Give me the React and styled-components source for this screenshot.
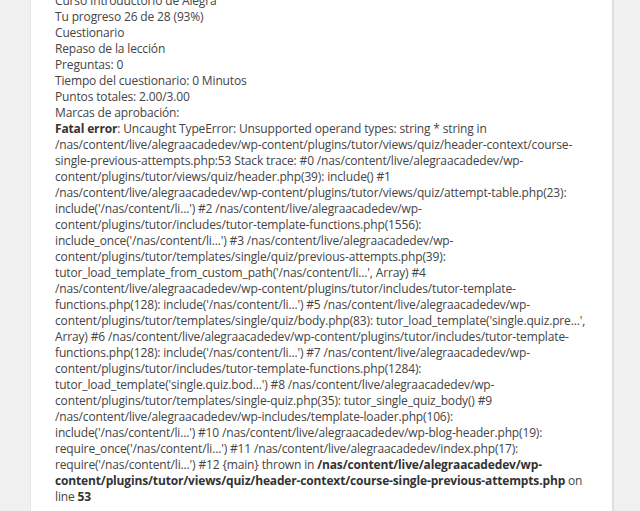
import React from 'react';
import styled, { createGlobalStyle } from 'styled-components';

const GlobalStyle = createGlobalStyle`
    html, body {
        margin: 0;
        padding: 0;
        background-color: #F0F0F0;
    }
`;

const Page = styled.div`
    height: 511px;
    overflow: hidden;
    padding: 0 26px 0 30px;
`;

const Panel = styled.div`
    background-color: #FFFFFF;
    border-left: 1px solid #E6E6E6;
    border-right: 2px solid #DEDEDE;
    margin-top: -7px;
    padding: 0 20px 40px 24px;
    min-height: 560px;
    font-family: "Open Sans", "Noto Sans", sans-serif;
    font-size: 12px;
    letter-spacing: -0.15px;
    line-height: 16px;
    color: #444444;
`;

const Line = styled.div`
    white-space: nowrap;
`;

const ErrorBlock = styled.div`
    white-space: nowrap;

    b {
        font-weight: bold;
        color: #333333;
    }
`;

const info = [
    'Curso Introductorio de Alegra',
    'Tu progreso 26 de 28 (93%)',
    'Cuestionario',
    'Repaso de la lección',
    'Preguntas: 0',
    'Tiempo del cuestionario: 0 Minutos',
    'Puntos totales: 2.00/3.00',
    'Marcas de aprobación:',
];

const trace = [
    "/nas/content/live/alegraacadedev/wp-content/plugins/tutor/views/quiz/header-context/course-",
    "single-previous-attempts.php:53 Stack trace: #0 /nas/content/live/alegraacadedev/wp-",
    "content/plugins/tutor/views/quiz/header.php(39): include() #1",
    "/nas/content/live/alegraacadedev/wp-content/plugins/tutor/views/quiz/attempt-table.php(23):",
    "include('/nas/content/li...') #2 /nas/content/live/alegraacadedev/wp-",
    "content/plugins/tutor/includes/tutor-template-functions.php(1556):",
    "include_once('/nas/content/li...') #3 /nas/content/live/alegraacadedev/wp-",
    "content/plugins/tutor/templates/single/quiz/previous-attempts.php(39):",
    "tutor_load_template_from_custom_path('/nas/content/li...', Array) #4",
    "/nas/content/live/alegraacadedev/wp-content/plugins/tutor/includes/tutor-template-",
    "functions.php(128): include('/nas/content/li...') #5 /nas/content/live/alegraacadedev/wp-",
    "content/plugins/tutor/templates/single/quiz/body.php(83): tutor_load_template('single.quiz.pre...',",
    "Array) #6 /nas/content/live/alegraacadedev/wp-content/plugins/tutor/includes/tutor-template-",
    "functions.php(128): include('/nas/content/li...') #7 /nas/content/live/alegraacadedev/wp-",
    "content/plugins/tutor/includes/tutor-template-functions.php(1284):",
    "tutor_load_template('single.quiz.bod...') #8 /nas/content/live/alegraacadedev/wp-",
    "content/plugins/tutor/templates/single-quiz.php(35): tutor_single_quiz_body() #9",
    "/nas/content/live/alegraacadedev/wp-includes/template-loader.php(106):",
    "include('/nas/content/li...') #10 /nas/content/live/alegraacadedev/wp-blog-header.php(19):",
    "require_once('/nas/content/li...') #11 /nas/content/live/alegraacadedev/index.php(17):",
];

const App = () => {
    return (
        <Page>
            <GlobalStyle />
            <Panel>
                {info.map((text) => (
                    <Line key={text}>{text}</Line>
                ))}
                <ErrorBlock>
                    <Line><b>Fatal error</b>: Uncaught TypeError: Unsupported operand types: string * string in</Line>
                    {trace.map((text, i) => (
                        <Line key={i}>{text}</Line>
                    ))}
                    <Line>require('/nas/content/li...') #12 {'{main}'} thrown in <b>/nas/content/live/alegraacadedev/wp-</b></Line>
                    <Line><b>content/plugins/tutor/views/quiz/header-context/course-single-previous-attempts.php</b> on</Line>
                    <Line>line <b>53</b></Line>
                </ErrorBlock>
            </Panel>
        </Page>
    );
};

export default App;
